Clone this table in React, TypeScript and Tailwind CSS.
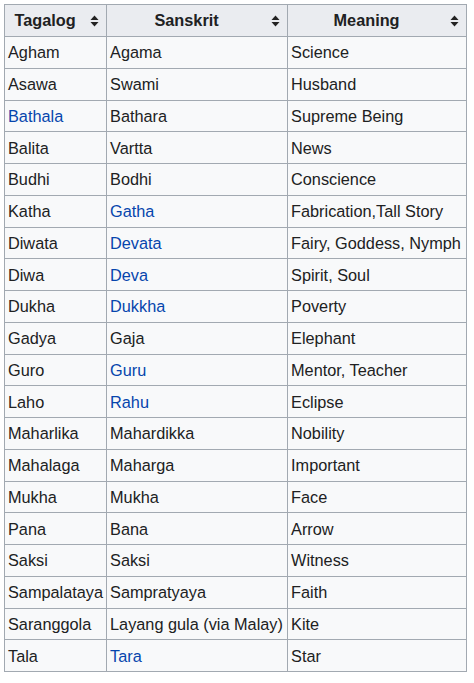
import React from 'react';

type Cell = { text: string; link?: boolean };

const rows: [Cell, Cell, Cell][] = [
  [{ text: 'Agham' }, { text: 'Agama' }, { text: 'Science' }],
  [{ text: 'Asawa' }, { text: 'Swami' }, { text: 'Husband' }],
  [{ text: 'Bathala', link: true }, { text: 'Bathara' }, { text: 'Supreme Being' }],
  [{ text: 'Balita' }, { text: 'Vartta' }, { text: 'News' }],
  [{ text: 'Budhi' }, { text: 'Bodhi' }, { text: 'Conscience' }],
  [{ text: 'Katha' }, { text: 'Gatha', link: true }, { text: 'Fabrication,Tall Story' }],
  [{ text: 'Diwata' }, { text: 'Devata', link: true }, { text: 'Fairy, Goddess, Nymph' }],
  [{ text: 'Diwa' }, { text: 'Deva', link: true }, { text: 'Spirit, Soul' }],
  [{ text: 'Dukha' }, { text: 'Dukkha', link: true }, { text: 'Poverty' }],
  [{ text: 'Gadya' }, { text: 'Gaja' }, { text: 'Elephant' }],
  [{ text: 'Guro' }, { text: 'Guru', link: true }, { text: 'Mentor, Teacher' }],
  [{ text: 'Laho' }, { text: 'Rahu', link: true }, { text: 'Eclipse' }],
  [{ text: 'Maharlika' }, { text: 'Mahardikka' }, { text: 'Nobility' }],
  [{ text: 'Mahalaga' }, { text: 'Maharga' }, { text: 'Important' }],
  [{ text: 'Mukha' }, { text: 'Mukha' }, { text: 'Face' }],
  [{ text: 'Pana' }, { text: 'Bana' }, { text: 'Arrow' }],
  [{ text: 'Saksi' }, { text: 'Saksi' }, { text: 'Witness' }],
  [{ text: 'Sampalataya' }, { text: 'Sampratyaya' }, { text: 'Faith' }],
  [{ text: 'Saranggola' }, { text: 'Layang gula (via Malay)' }, { text: 'Kite' }],
  [{ text: 'Tala' }, { text: 'Tara', link: true }, { text: 'Star' }],
];

const SortIcon = () => (
  <svg width="9" height="12" viewBox="0 0 9 12" className="absolute right-[7px] top-1/2 -translate-y-1/2">
    <polygon points="4.5,0.5 8.5,5 0.5,5" fill="#222" />
    <polygon points="0.5,7 8.5,7 4.5,11.5" fill="#222" />
  </svg>
);

const headers = ['Tagalog', 'Sanskrit', 'Meaning'];

export default function App() {
  return (
    <div className="w-[474px] h-[683px] bg-white pt-[4px] pl-[4px]" style={{ fontFamily: '"Liberation Sans", Arial, sans-serif' }}>
      <table className="table-fixed border-collapse border border-[#a2a9b1] bg-[#f8f9fa] text-[16.3px] text-[#202122]">
        <colgroup>
          <col className="w-[102px]" />
          <col className="w-[181px]" />
          <col className="w-[179px]" />
        </colgroup>
        <thead>
          <tr className="h-[32px]">
            {headers.map((h) => (
              <th key={h} className="relative border border-[#a2a9b1] bg-[#eaecf0] pl-[2px] pr-[23px] text-center font-bold">
                {h}
                <SortIcon />
              </th>
            ))}
          </tr>
        </thead>
        <tbody>
          {rows.map((r, i) => (
            <tr key={i} className="h-[31.75px]">
              {r.map((c, j) => (
                <td key={j} className="border border-[#a2a9b1] px-[3px] whitespace-nowrap leading-[20px]">
                  {c.link ? <span className="text-[#0645ad]">{c.text}</span> : c.text}
                </td>
              ))}
            </tr>
          ))}
        </tbody>
      </table>
    </div>
  );
}
